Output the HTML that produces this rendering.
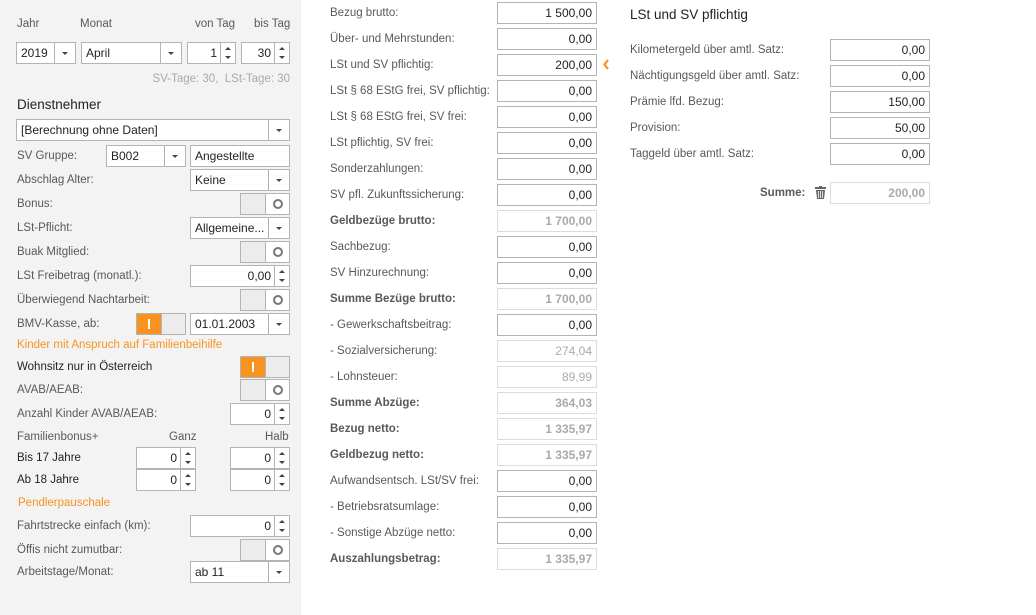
<!DOCTYPE html>
<html><head><meta charset="utf-8"><style>
*{box-sizing:border-box;margin:0;padding:0}
body{width:1036px;height:615px;background:#fff;font-family:"Liberation Sans",sans-serif;position:relative;overflow:hidden}
.panel{position:absolute;left:0;top:0;width:301px;height:615px;background:#f3f3f3}
.l{position:absolute;font-size:11.5px;color:#595959;line-height:23px;white-space:nowrap}
.d{color:#222}
.o{color:#f7931e}
.bd{font-weight:bold}
.b{position:absolute;height:22px;border:1px solid #b4b4b4;background:#fff;font-size:12px;color:#222;line-height:20px;text-align:right;padding-right:4px;white-space:nowrap}
.ro{border-color:#dcdcdc;color:#aaa}
.tx{text-align:left;padding-left:4px}
.cb{text-align:left;padding-left:4px}
.cb:after{content:"";position:absolute;right:0;top:0;width:20px;height:20px;border-left:1px solid #b4b4b4}
.cb i{position:absolute;right:7px;top:9px;width:0;height:0;border-left:3px solid transparent;border-right:3px solid transparent;border-top:3px solid #444;z-index:2}
.sp{padding-right:18px}
.sp:after{content:"";position:absolute;right:0;top:0;width:14px;height:20px;border-left:1px solid #b4b4b4}
.sp s{position:absolute;right:4px;width:0;height:0;border-left:3px solid transparent;border-right:3px solid transparent;z-index:2}
.sp s.u{top:4px;border-bottom:3px solid #444}
.sp s.dn{bottom:4px;border-top:3px solid #444}
.tg{position:absolute;width:50px;height:22px;border:1px solid #b4b4b4;background:linear-gradient(90deg,#ececec 24px,#fff 24px)}
.tg:after{content:"";position:absolute;left:24px;top:0;width:1px;height:20px;background:#b4b4b4}
.tg .c{position:absolute;right:6px;top:5px;width:10px;height:10px;border:2px solid #777;border-radius:50%;background:#fff}
.tg.on{background:#ececec}
.tg.on .k{position:absolute;left:0;top:0;width:24px;height:20px;background:#f7931e}
.tg.on .k:after{content:"";position:absolute;left:11px;top:5px;width:2px;height:10px;background:#fff}
</style></head><body>
<div class="panel"></div>
<div class="l" style="left:17px;top:13px">Jahr</div>
<div class="l" style="left:80px;top:13px">Monat</div>
<div class="l" style="left:195px;top:13px">von Tag</div>
<div class="l" style="left:254px;top:13px">bis Tag</div>
<div class="b cb" style="left:16px;top:42px;width:60px">2019<i></i></div>
<div class="b cb" style="left:81px;top:42px;width:101px">April<i></i></div>
<div class="b sp" style="left:187px;top:42px;width:49px">1<s class="u"></s><s class="dn"></s></div>
<div class="b sp" style="left:241px;top:42px;width:49px">30<s class="u"></s><s class="dn"></s></div>
<div class="l" style="left:145px;top:68px;width:145px;text-align:right;color:#aaa">SV-Tage: 30,&nbsp; LSt-Tage: 30</div>
<div class="l d" style="left:17px;top:93px;font-size:13.5px">Dienstnehmer</div>
<div class="b cb" style="left:16px;top:119px;width:274px">[Berechnung ohne Daten]<i></i></div>
<div class="l" style="left:17px;top:145px">SV Gruppe:</div>
<div class="b cb" style="left:106px;top:145px;width:80px">B002<i></i></div>
<div class="b tx" style="left:190px;top:145px;width:100px">Angestellte</div>
<div class="l" style="left:17px;top:169px">Abschlag Alter:</div>
<div class="b cb" style="left:190px;top:169px;width:100px">Keine<i></i></div>
<div class="l" style="left:17px;top:193px">Bonus:</div>
<div class="tg" style="left:240px;top:193px"><span class="c"></span></div>
<div class="l" style="left:17px;top:217px">LSt-Pflicht:</div>
<div class="b cb" style="left:190px;top:217px;width:100px">Allgemeine...<i></i></div>
<div class="l" style="left:17px;top:241px">Buak Mitglied:</div>
<div class="tg" style="left:240px;top:241px"><span class="c"></span></div>
<div class="l" style="left:17px;top:265px">LSt Freibetrag (monatl.):</div>
<div class="b sp" style="left:190px;top:265px;width:100px">0,00<s class="u"></s><s class="dn"></s></div>
<div class="l" style="left:17px;top:289px">Überwiegend Nachtarbeit:</div>
<div class="tg" style="left:240px;top:289px"><span class="c"></span></div>
<div class="l" style="left:17px;top:313px">BMV-Kasse, ab:</div>
<div class="tg on" style="left:136px;top:313px"><span class="k"></span></div>
<div class="b cb" style="left:190px;top:313px;width:100px">01.01.2003<i></i></div>
<div class="l o" style="left:17px;top:334px">Kinder mit Anspruch auf Familienbeihilfe</div>
<div class="l d" style="left:17px;top:356px">Wohnsitz nur in Österreich</div>
<div class="tg on" style="left:240px;top:356px"><span class="k"></span></div>
<div class="l" style="left:17px;top:379px">AVAB/AEAB:</div>
<div class="tg" style="left:240px;top:379px"><span class="c"></span></div>
<div class="l" style="left:17px;top:403px">Anzahl Kinder AVAB/AEAB:</div>
<div class="b sp" style="left:230px;top:403px;width:60px">0<s class="u"></s><s class="dn"></s></div>
<div class="l" style="left:17px;top:426px">Familienbonus+</div>
<div class="l" style="left:169px;top:426px">Ganz</div>
<div class="l" style="left:265px;top:426px">Halb</div>
<div class="l d" style="left:17px;top:447px">Bis 17 Jahre</div>
<div class="b sp" style="left:136px;top:447px;width:60px">0<s class="u"></s><s class="dn"></s></div>
<div class="b sp" style="left:230px;top:447px;width:60px">0<s class="u"></s><s class="dn"></s></div>
<div class="l d" style="left:17px;top:469px">Ab 18 Jahre</div>
<div class="b sp" style="left:136px;top:469px;width:60px">0<s class="u"></s><s class="dn"></s></div>
<div class="b sp" style="left:230px;top:469px;width:60px">0<s class="u"></s><s class="dn"></s></div>
<div class="l o" style="left:18px;top:492px">Pendlerpauschale</div>
<div class="l" style="left:17px;top:515px">Fahrtstrecke einfach (km):</div>
<div class="b sp" style="left:190px;top:515px;width:100px">0<s class="u"></s><s class="dn"></s></div>
<div class="l" style="left:17px;top:539px">Öffis nicht zumutbar:</div>
<div class="tg" style="left:240px;top:539px"><span class="c"></span></div>
<div class="l" style="left:17px;top:561px">Arbeitstage/Monat:</div>
<div class="b cb" style="left:190px;top:561px;width:100px">ab 11<i></i></div>

<!-- middle -->
<div class="l" style="left:330px;top:2px">Bezug brutto:</div><div class="b" style="left:497px;top:2px;width:100px">1 500,00</div>
<div class="l" style="left:330px;top:28px">Über- und Mehrstunden:</div><div class="b" style="left:497px;top:28px;width:100px">0,00</div>
<div class="l" style="left:330px;top:54px">LSt und SV pflichtig:</div><div class="b" style="left:497px;top:54px;width:100px">200,00</div>
<svg style="position:absolute;left:603px;top:59px" width="6" height="11" viewBox="0 0 6 11"><path d="M5 1L1.5 5.5 5 10" fill="none" stroke="#f7931e" stroke-width="2.2"/></svg>
<div class="l" style="left:330px;top:80px">LSt § 68 EStG frei, SV pflichtig:</div><div class="b" style="left:497px;top:80px;width:100px">0,00</div>
<div class="l" style="left:330px;top:106px">LSt § 68 EStG frei, SV frei:</div><div class="b" style="left:497px;top:106px;width:100px">0,00</div>
<div class="l" style="left:330px;top:132px">LSt pflichtig, SV frei:</div><div class="b" style="left:497px;top:132px;width:100px">0,00</div>
<div class="l" style="left:330px;top:158px">Sonderzahlungen:</div><div class="b" style="left:497px;top:158px;width:100px">0,00</div>
<div class="l" style="left:330px;top:184px">SV pfl. Zukunftssicherung:</div><div class="b" style="left:497px;top:184px;width:100px">0,00</div>
<div class="l bd" style="left:330px;top:210px">Geldbezüge brutto:</div><div class="b ro bd" style="left:497px;top:210px;width:100px">1 700,00</div>
<div class="l" style="left:330px;top:236px">Sachbezug:</div><div class="b" style="left:497px;top:236px;width:100px">0,00</div>
<div class="l" style="left:330px;top:262px">SV Hinzurechnung:</div><div class="b" style="left:497px;top:262px;width:100px">0,00</div>
<div class="l bd" style="left:330px;top:288px">Summe Bezüge brutto:</div><div class="b ro bd" style="left:497px;top:288px;width:100px">1 700,00</div>
<div class="l" style="left:330px;top:314px">- Gewerkschaftsbeitrag:</div><div class="b" style="left:497px;top:314px;width:100px">0,00</div>
<div class="l" style="left:330px;top:340px">- Sozialversicherung:</div><div class="b ro" style="left:497px;top:340px;width:100px">274,04</div>
<div class="l" style="left:330px;top:366px">- Lohnsteuer:</div><div class="b ro" style="left:497px;top:366px;width:100px">89,99</div>
<div class="l bd" style="left:330px;top:392px">Summe Abzüge:</div><div class="b ro bd" style="left:497px;top:392px;width:100px">364,03</div>
<div class="l bd" style="left:330px;top:418px">Bezug netto:</div><div class="b ro bd" style="left:497px;top:418px;width:100px">1 335,97</div>
<div class="l bd" style="left:330px;top:444px">Geldbezug netto:</div><div class="b ro bd" style="left:497px;top:444px;width:100px">1 335,97</div>
<div class="l" style="left:330px;top:470px">Aufwandsentsch. LSt/SV frei:</div><div class="b" style="left:497px;top:470px;width:100px">0,00</div>
<div class="l" style="left:330px;top:496px">- Betriebsratsumlage:</div><div class="b" style="left:497px;top:496px;width:100px">0,00</div>
<div class="l" style="left:330px;top:522px">- Sonstige Abzüge netto:</div><div class="b" style="left:497px;top:522px;width:100px">0,00</div>
<div class="l bd" style="left:330px;top:548px">Auszahlungsbetrag:</div><div class="b ro bd" style="left:497px;top:548px;width:100px">1 335,97</div>

<!-- right -->
<div class="l d" style="left:630px;top:3px;font-size:13.5px">LSt und SV pflichtig</div>
<div class="l" style="left:630px;top:39px">Kilometergeld über amtl. Satz:</div><div class="b" style="left:830px;top:39px;width:100px">0,00</div>
<div class="l" style="left:630px;top:65px">Nächtigungsgeld über amtl. Satz:</div><div class="b" style="left:830px;top:65px;width:100px">0,00</div>
<div class="l" style="left:630px;top:91px">Prämie lfd. Bezug:</div><div class="b" style="left:830px;top:91px;width:100px">150,00</div>
<div class="l" style="left:630px;top:117px">Provision:</div><div class="b" style="left:830px;top:117px;width:100px">50,00</div>
<div class="l" style="left:630px;top:143px">Taggeld über amtl. Satz:</div><div class="b" style="left:830px;top:143px;width:100px">0,00</div>
<div class="l bd" style="left:760px;top:182px">Summe:</div>
<svg style="position:absolute;left:815px;top:186px" width="11" height="13" viewBox="0 0 11 13"><rect x="0" y="1" width="11" height="2" fill="#666"/><rect x="4" y="0" width="3" height="1" fill="#666"/><path d="M1 4h9l-1 9H2z" fill="#666"/><path d="M3.5 5v7M5.5 5v7M7.5 5v7" stroke="#fff" stroke-width="0.8"/></svg>
<div class="b ro bd" style="left:830px;top:182px;width:100px">200,00</div>
</body></html>
